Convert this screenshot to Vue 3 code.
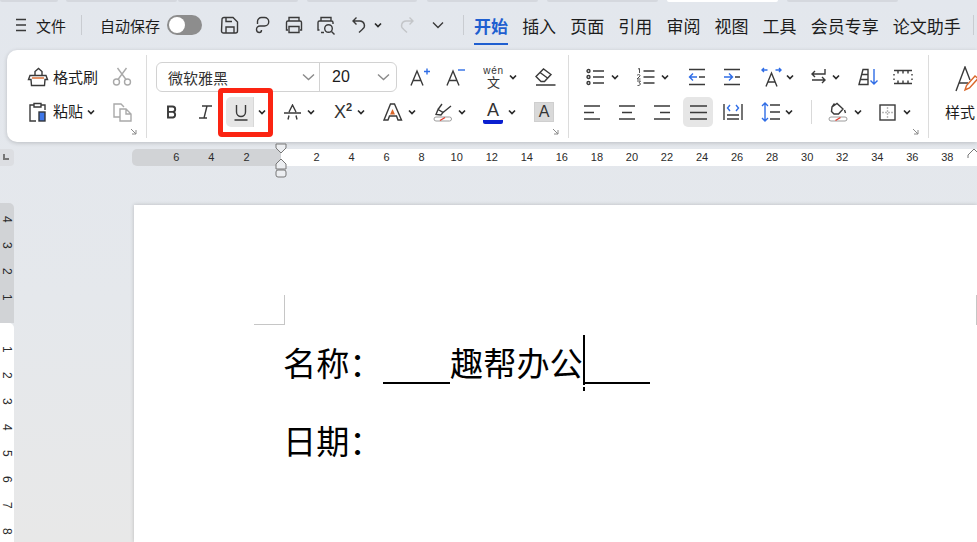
<script setup>
const tabs = ['插入', '页面', '引用', '审阅', '视图', '工具', '会员专享', '论文助手']
const rulerLeft = [6, 4, 2]
const rulerRight = [2, 4, 6, 8, 10, 12, 14, 16, 18, 20, 22, 24, 26, 28, 30, 32, 34, 36, 38]
</script>

<template>
  <div class="app">
    <div class="tabstrip">
      <i class="t1"></i><i class="t2"></i><i class="t3"></i><i class="t4"></i><i class="t5"></i><i class="t6"></i><i class="t7"></i><i class="t8"></i>
    </div>

    <header class="menubar">
      <svg class="ic hamburger" width="12" height="14" viewBox="0 0 12 14"><path d="M1 1.500h10M1 7h10M1 12.500h10" /></svg>
      <span class="file">文件</span>
      <span class="vsep sep-a"></span>
      <span class="autosave">自动保存</span>
      <span class="toggle"><span class="knob"></span></span>
      <svg class="ic qa-save" width="20" height="20" viewBox="0 0 20 20"><path d="M2 4.500a2 2 0 0 1 2-2h9l4.500 4.500v9a2 2 0 0 1-2 2h-12a2 2 0 0 1-2-2zM6 2.500v4h6M6 18v-6h8v6" /></svg>
      <svg class="ic qa-share" width="18" height="20" viewBox="0 0 18 20"><path d="M4.500 9V6.500a4 4 0 0 1 4-4h3a4 4 0 0 1 0 8.500H7a3.500 3.500 0 0 0-3.500 3.500A3 3 0 0 0 6.500 17.500c1.500 0 2-1 2-2.500" /></svg>
      <svg class="ic qa-print" width="20" height="20" viewBox="0 0 20 20"><path d="M5 6V2.500h10V6M4 15H2.500V7.500a1.500 1.500 0 0 1 1.500-1.500h12a1.500 1.500 0 0 1 1.500 1.500V15H16M5 11.500h10v6H5z" /></svg>
      <svg class="ic qa-preview" width="20" height="20" viewBox="0 0 20 20"><path d="M5 6V2.500h10V6M3.500 15H2V7.500A1.500 1.500 0 0 1 3.500 6h12A1.500 1.500 0 0 1 17 7.500V9M8 17.500H5" /><circle cx="12.500" cy="13.500" r="3.800" /><path d="M15.500 16.500l3 3" /></svg>
      <svg class="ic qa-undo" width="16" height="18" viewBox="0 0 16 18"><path d="M5.500 1.500L2 5l3.500 3.500M2 5h7a4.500 4.500 0 0 1 2.500 8.200L8 16.500" /></svg>
      <svg class="chev qa-c1" width="8" height="6" viewBox="0 0 8 6"><path d="M1 1.500l3 3 3-3" /></svg>
      <svg class="ic qa-redo" width="16" height="18" viewBox="0 0 16 18"><path d="M10.500 1.500L14 5l-3.500 3.500M14 5H7a4.500 4.500 0 0 0-2.500 8.200L8 16.500" /></svg>
      <svg class="ic qa-more" width="14" height="8" viewBox="0 0 14 8"><path d="M2 1.500l5 5 5-5" /></svg>
      <span class="vsep sep-b"></span>
      <nav class="tabs">
        <span class="tab active">开始</span>
        <span v-for="t in tabs" :key="t" class="tab">{{ t }}</span>
      </nav>
      <span class="vsep sep-c"></span>
    </header>

    <section class="ribbon">
      <div class="group g-clip">
        <div class="row">
          <svg class="ic i-brush" width="22" height="22" viewBox="0 0 22 22"><path d="M3 9.500h16l1.500 4H18l-.5 6H4.500L4 13.500H1.500zM8 9.500V5.500l3.500-3 3.500 3v4" /><path class="orange" d="M5 12h12" /></svg>
          <span class="lbl">格式刷</span>
          <svg class="ic gray i-cut" width="20" height="20" viewBox="0 0 20 20"><circle cx="4.500" cy="15" r="3" /><circle cx="15.500" cy="15" r="3" /><path d="M6 12.500L14.500 1M14 12.500L5.500 1" /></svg>
        </div>
        <div class="row row2">
          <svg class="ic i-paste" width="20" height="22" viewBox="0 0 20 22"><path d="M6 4H2v16h6M13 4h4v5M6 2.500h7V6H6z" /><rect class="bluefill" x="11" y="11" width="6" height="9" /></svg>
          <span class="lbl">粘贴</span>
          <svg class="chev c-paste" width="8" height="6" viewBox="0 0 8 6"><path d="M1 1.500l3 3 3-3" /></svg>
          <svg class="ic gray i-copy" width="20" height="20" viewBox="0 0 20 20"><path d="M8 15H2V2h7l3 3M8 7h6l5 5v7H8zM14 7v5h5" /></svg>
        </div>
        <svg class="launcher" width="7" height="7" viewBox="0 0 7 7"><path d="M1 1l5 5M6 2v4H2" /></svg>
      </div>

      <div class="group g-font">
        <div class="row">
          <div class="fontbox">
            <span class="fontname">微软雅黑</span>
            <svg class="ic box-chev" width="13" height="8" viewBox="0 0 13 8"><path d="M1 1.500l5.500 5 5.500-5" /></svg>
            <span class="fontsize">20</span>
            <svg class="ic box-chev" width="13" height="8" viewBox="0 0 13 8"><path d="M1 1.500l5.500 5 5.500-5" /></svg>
          </div>
          <svg class="ic i-grow" width="20" height="20" viewBox="0 0 20 20"><path d="M1 18.500L7 4l6 14.500M3 13.500h8" /><path class="blue" d="M14 4.500h6M17 1.500v6" /></svg>
          <svg class="ic i-shrink" width="20" height="20" viewBox="0 0 20 20"><path d="M1 18.500L7 4l6 14.500M3 13.500h8" /><path class="blue" d="M12 3h7" /></svg>
          <span class="wen"><span class="wen-py">wén</span><span class="wen-zh">文</span></span>
          <svg class="chev c-wen" width="8" height="6" viewBox="0 0 8 6"><path d="M1 1.500l3 3 3-3" /></svg>
          <svg class="ic i-eraser" width="21" height="18" viewBox="0 0 21 18"><path d="M1 8.500L8.500 1l7.500 5.500-6.500 7H6zM5 4.500L12.500 10M1 17h19.500" /></svg>
        </div>
        <div class="row row2">
          <svg class="ic i-bold" width="12" height="14" viewBox="0 0 12 14"><path class="thick" d="M2 1.500h4.500a2.700 2.700 0 0 1 0 5.400H2zM2 6.900h5a2.900 2.900 0 0 1 0 5.600H2z" /></svg>
          <svg class="ic i-italic" width="15" height="14" viewBox="0 0 15 14"><path d="M4 1h10M9 1L6 13M1 13h8" /></svg>
          <div class="ubtn">
            <span class="ubtn-main">
              <svg class="ic" width="14" height="17" viewBox="0 0 14 17"><path d="M2.500 1v7a4.500 4.500 0 0 0 9 0V1M0.500 16h13" /></svg>
            </span>
            <span class="ubtn-arrow">
              <svg class="chev" width="8" height="6" viewBox="0 0 8 6"><path d="M1 1.500l3 3 3-3" /></svg>
            </span>
          </div>
          <svg class="ic i-strike" width="17" height="17" viewBox="0 0 17 17"><path d="M4 15.500l1-4M12 11.500l1 4M5 8l3.500-7L12 8M0 9h17" /></svg>
          <svg class="chev c-strike" width="8" height="6" viewBox="0 0 8 6"><path d="M1 1.500l3 3 3-3" /></svg>
          <span class="super">X<sup>2</sup></span>
          <svg class="chev c-super" width="8" height="6" viewBox="0 0 8 6"><path d="M1 1.500l3 3 3-3" /></svg>
          <svg class="ic i-texta" width="20" height="20" viewBox="0 0 20 20"><path d="M1 18L7.500 2h4L18.500 18H15l-1.500-4h-7L5 18z" /><path class="orangefill" d="M9.500 7l2.500 5.500H7z" /></svg>
          <svg class="chev c-texta" width="8" height="6" viewBox="0 0 8 6"><path d="M1 1.500l3 3 3-3" /></svg>
          <svg class="ic i-high" width="20" height="20" viewBox="0 0 20 20"><path d="M3 12.500l2-5 5 3-2 2.500zM5 7.500L9 2M10 10.500L18 4" /><rect class="pill" x="1" y="15" width="17.500" height="4" rx="2" /><path class="red" d="M7 18.500l5-3" /></svg>
          <svg class="chev c-high" width="8" height="6" viewBox="0 0 8 6"><path d="M1 1.500l3 3 3-3" /></svg>
          <span class="fcolor">A</span>
          <svg class="chev c-fcolor" width="8" height="6" viewBox="0 0 8 6"><path d="M1 1.500l3 3 3-3" /></svg>
          <span class="shaded">A</span>
        </div>
        <svg class="launcher" width="7" height="7" viewBox="0 0 7 7"><path d="M1 1l5 5M6 2v4H2" /></svg>
      </div>

      <div class="group g-para">
        <div class="row">
          <svg class="ic i-bullet" width="19" height="18" viewBox="0 0 19 18"><circle cx="2.500" cy="3" r="1.500" /><circle cx="2.500" cy="9" r="1.500" /><circle cx="2.500" cy="15" r="1.500" /><path d="M7 3h11M7 9h11M7 15h11" /></svg>
          <svg class="chev c-bullet" width="8" height="6" viewBox="0 0 8 6"><path d="M1 1.500l3 3 3-3" /></svg>
          <svg class="ic i-num" width="19" height="18" viewBox="0 0 19 18"><path class="thin" d="M2 1l1.500-.5v4.500M1 7.500c1-1.500 3.500-1 3 .5L1 11h3.500M1 13h3.500l-1.500 1.800c2 0 2 3-1.500 2.700" /><path d="M7.500 3h11M7.500 9h11M7.500 15h11" /></svg>
          <svg class="chev c-num" width="8" height="6" viewBox="0 0 8 6"><path d="M1 1.500l3 3 3-3" /></svg>
          <svg class="ic i-out" width="18" height="18" viewBox="0 0 18 18"><path d="M1 1.500h16M11 9h6M1 16.500h16" /><path class="blue" d="M9 9H1.500M5 5.500L1.500 9 5 12.500" /></svg>
          <svg class="ic i-in" width="18" height="18" viewBox="0 0 18 18"><path d="M1 1.500h16M12 9h5M1 16.500h16" /><path class="blue" d="M1 9h8.500M6 5.500L9.500 9 6 12.500" /></svg>
          <svg class="ic i-awide" width="21" height="20" viewBox="0 0 21 20"><path d="M5 19.500L10.500 6l5.500 13.500M6.500 15h8" /><path class="blue" d="M1 3h5.500M3 1L1 3l2 2M14.500 3H20M18 1l2 2-2 2" /></svg>
          <svg class="chev c-awide" width="8" height="6" viewBox="0 0 8 6"><path d="M1 1.500l3 3 3-3" /></svg>
          <svg class="ic i-flow" width="17" height="18" viewBox="0 0 17 18"><path d="M15 1v5H2M5 3L2 6l3 3M2 12h13M12 9l3 3-3 3" /></svg>
          <svg class="chev c-flow" width="8" height="6" viewBox="0 0 8 6"><path d="M1 1.500l3 3 3-3" /></svg>
          <svg class="ic i-sort" width="21" height="18" viewBox="0 0 21 18"><path d="M1 16.500L5 1.500h5v15zM3.500 6.500H10M2.500 11.500H10" /><path class="blue" d="M16 1v15M12.500 12.500L16 16l3.500-3.500" /></svg>
          <svg class="ic i-ruler" width="20" height="18" viewBox="0 0 20 18"><path d="M1 2.500h18M1 15.500h18M1 6v1.500M1 10.500V12M19 6v1.500M19 10.500V12M5 2.500v3M10 2.500v3M15 2.500v3M5 12.500v3M10 12.500v3M15 12.500v3" /></svg>
        </div>
        <div class="row row2">
          <svg class="ic i-al" width="17" height="17" viewBox="0 0 17 17"><path d="M0 2h16M0 8.500h10M0 15h16" /></svg>
          <svg class="ic i-ac" width="17" height="17" viewBox="0 0 17 17"><path d="M0 2h16M3 8.500h10M0 15h16" /></svg>
          <svg class="ic i-ar" width="17" height="17" viewBox="0 0 17 17"><path d="M0 2h16M6 8.500h10M0 15h16" /></svg>
          <span class="justify">
            <svg class="ic" width="17" height="17" viewBox="0 0 17 17"><path d="M0 2h17M0 8.500h17M0 15h17" /></svg>
          </span>
          <svg class="ic i-dist" width="20" height="18" viewBox="0 0 20 18"><path d="M1 1v16M19 1v16M4 12h12M4 16h12" /><path class="blue" d="M7 2L4.500 5 7 8M13 2l2.500 3L13 8" /></svg>
          <svg class="ic i-line" width="19" height="20" viewBox="0 0 19 20"><path d="M9 3h10M9 10h10M9 17h10" /><path class="blue" d="M4 1v18M1 4l3-3 3 3M1 16l3 3 3-3" /></svg>
          <svg class="chev c-line" width="8" height="6" viewBox="0 0 8 6"><path d="M1 1.500l3 3 3-3" /></svg>
          <span class="vsep sep-d"></span>
          <svg class="ic i-paint" width="20" height="20" viewBox="0 0 20 20"><path d="M4 5l5-3.500 6 5.500-4.500 5H6L3.500 9.500zM6.500 1.500L4 5M16.500 8l1 3" /><rect class="pill" x="1" y="15" width="18" height="4" rx="2" /><path class="red" d="M7.500 18.500l5-3" /></svg>
          <svg class="chev c-paint" width="8" height="6" viewBox="0 0 8 6"><path d="M1 1.500l3 3 3-3" /></svg>
          <svg class="ic i-border" width="17" height="17" viewBox="0 0 17 17"><rect x="1" y="1" width="15" height="15" /><path class="faint" d="M8.500 3v11M3 8.500h11" /></svg>
          <svg class="chev c-border" width="8" height="6" viewBox="0 0 8 6"><path d="M1 1.500l3 3 3-3" /></svg>
        </div>
        <svg class="launcher" width="7" height="7" viewBox="0 0 7 7"><path d="M1 1l5 5M6 2v4H2" /></svg>
      </div>

      <div class="group g-style">
        <svg class="ic i-style" width="24" height="26" viewBox="0 0 24 26"><path d="M1 25L10 1l5 13M4 17h9" /><path class="orange" d="M10 24l1.500-4.500L20 10l3 2.500-8.500 9.500z" /></svg>
        <span class="lbl style-lbl">样式</span>
      </div>
    </section>

    <div class="hruler">
      <span class="corner"><i></i></span>
      <div class="ruler-grey">
        <span v-for="n in rulerLeft" :key="n" class="tick">{{ n }}</span>
      </div>
      <div class="ruler-white">
        <span v-for="n in rulerRight" :key="n" class="tick">{{ n }}</span>
      </div>
      <svg class="marker left-marker" width="14" height="36" viewBox="0 0 14 36"><path d="M2 1h10v4l-5 5-5-5z" /><path d="M7 16l5 5v5H2v-5z" /><rect x="2" y="27" width="10" height="7" rx="2" /></svg>
      <svg class="marker right-marker" width="12" height="20" viewBox="0 0 12 20"><path d="M1 19v-3l6-6 5 5" /></svg>
    </div>

    <main class="workspace">
      <aside class="vruler">
        <div class="v-grey">
          <span v-for="n in [4, 3, 2, 1]" :key="n" class="vtick">{{ n }}</span>
        </div>
        <div class="v-white">
          <span v-for="n in 8" :key="n" class="vtick">{{ n }}</span>
        </div>
      </aside>
      <article class="page">
        <div class="crop-row">
          <span class="crop"></span>
          <span class="crop-right"></span>
        </div>
        <p class="line first">
          <span>名称：</span><span class="blank"></span><span class="filled">趣帮办公</span><span class="blank"></span>
          <span class="caret"></span>
        </p>
        <p class="line second">日期：</p>
      </article>
    </main>
  </div>
</template>

<style>
html, body {
  margin: 0;
  overflow: hidden;
}
</style>

<style scoped>
.app {
  width: 977px;
  height: 542px;
  overflow: hidden;
  position: relative;
  font-family: "Noto Sans CJK SC", "Liberation Sans", sans-serif;
  color: #1c1c1c;
  background: linear-gradient(180deg, #e3e7ed 0%, #e5e8ec 55%, #e8e8e8 100%);
}
.tabstrip {
  height: 2px;
  display: flex;
}
.tabstrip i {
  display: block;
  flex: none;
  background: #d5d8de;
  border-radius: 0 0 6px 6px;
}
.t1 { width: 58px; }
.t2 { width: 111px; margin-left: 8px; }
.t3 { width: 120px; margin-left: 1px; }
.t4 { width: 110px; margin-left: 9px; }
.t5 { width: 111px; margin-left: 10px; }
.t6 { width: 111px; margin-left: 9px; }
.t7 { width: 111px; margin-left: 9px; background: #fff !important; }
.t8 { width: 111px; margin-left: 9px; }

.ic {
  display: block;
  flex: none;
  fill: none;
  stroke: #3a3a3a;
  stroke-width: 1.400;
}
.chev {
  display: block;
  flex: none;
  fill: none;
  stroke: #2a2a2a;
  stroke-width: 1.700;
}
.blue { stroke: #2f6de6; }
.orange { stroke: #d9662a; }
.red { stroke: #e0392b; }
.pill { stroke: #9c9c9c; stroke-width: 1; }
.faint { stroke: #b9b9b9; stroke-dasharray: 2 1; }
.thin { stroke-width: 0.900; }
.thick { stroke-width: 1.900; }
.gray { stroke: #a9a9a9; }
.bluefill { fill: #3e77e8; stroke: #33363b; }
.orangefill { fill: #d9662a; stroke: none; }

.menubar {
  height: 46px;
  display: flex;
  align-items: center;
  font-size: 15px;
  white-space: nowrap;
}
.hamburger { margin-left: 15px; }
.file { margin-left: 9px; flex: none; }
.vsep {
  display: block;
  width: 1px;
  flex: none;
  background: #c9ccd1;
}
.sep-a { height: 20px; margin-left: 15px; }
.autosave { margin-left: 18px; flex: none; }
.toggle {
  width: 35px;
  height: 20px;
  margin-left: 7px;
  border-radius: 10px;
  background: #8d8d8d;
  display: flex;
  flex: none;
  align-items: center;
  padding-left: 2px;
  box-sizing: border-box;
}
.knob {
  width: 16px;
  height: 16px;
  border-radius: 50%;
  background: #fff;
}
.qa-save { margin-left: 18px; }
.qa-share { margin-left: 13px; }
.qa-print { margin-left: 13px; }
.qa-preview { margin-left: 12px; }
.qa-undo { margin-left: 15px; }
.qa-c1 { margin-left: 7px; }
.qa-redo { margin-left: 17px; stroke: #c3c5c8; }
.qa-more { margin-left: 16px; }
.sep-b { height: 20px; margin-left: 18px; }
.tabs {
  display: flex;
  flex: none;
  margin-left: 10px;
  gap: 14.100px;
  font-size: 17px;
}
.tab {
  height: 46px;
  line-height: 47px;
  box-sizing: border-box;
  white-space: nowrap;
}
.tab.active {
  color: #1f5fd0;
  font-weight: 700;
  position: relative;
}
.tab.active::after {
  content: "";
  position: absolute;
  left: 0;
  right: 0;
  bottom: 3px;
  height: 2px;
  background: #1f5fd0;
}
.sep-c { height: 20px; margin-left: 12px; }

.ribbon {
  margin: 2px 0 0 7px;
  height: 92px;
  background: #fff;
  border-radius: 10px 0 0 10px;
  box-shadow: 0 1px 4px rgba(0, 0, 0, .18);
  display: flex;
  font-size: 14px;
}
.group {
  position: relative;
  flex: none;
  box-sizing: border-box;
  display: flex;
  flex-direction: column;
  margin: 5px 0 4px;
  border-right: 1px solid #dcdcdc;
  height: 83px;
}
.row {
  height: 30px;
  margin-top: 7px;
  display: flex;
  align-items: center;
}
.row2 {
  height: 30px;
  margin-top: 5px;
}
.launcher {
  position: absolute;
  right: 9px;
  bottom: 3px;
  fill: none;
  stroke: #8a8a8a;
}
.g-clip { width: 140px; padding-left: 21px; }
.lbl { margin-left: 5px; font-size: 15px; white-space: nowrap; flex: none; }
.row2 .lbl { margin-top: -3px; }
.i-brush { margin-left: -1px; }
.i-brush + .lbl { margin-left: 4px; margin-top: -2px; }
.i-cut { margin-left: 14px; }
.c-paste { margin-left: 4px; }
.i-copy { margin-left: 17px; }

.g-font { width: 422px; padding-left: 9px; }
.fontbox {
  width: 241px;
  height: 30px;
  box-sizing: border-box;
  border: 1px solid #d2d2d2;
  border-radius: 6px;
  display: flex;
  align-items: center;
  flex: none;
}
.fontname {
  width: 145px;
  padding-left: 11px;
  box-sizing: border-box;
  font-size: 15px;
  color: #333;
  flex: none;
}
.box-chev { stroke: #8a8a8a; }
.fontsize {
  margin-left: 4px;
  padding-left: 12px;
  width: 58px;
  flex: none;
  box-sizing: border-box;
  border-left: 1px solid #d2d2d2;
  height: 28px;
  line-height: 27px;
  font-size: 16px;
  font-family: "Liberation Sans", sans-serif;
}
.i-grow { margin-left: 13px; }
.i-shrink { margin-left: 16px; }
.wen {
  margin-left: 15px;
  width: 25px;
  flex: none;
  display: flex;
  flex-direction: column;
  align-items: center;
  color: #333;
}
.wen-py {
  font: 10px/9px "Liberation Sans", sans-serif;
  letter-spacing: 0.800px;
  height: 9px;
  overflow: hidden;
}
.wen-zh { font-size: 13px; line-height: 13px; height: 13px; }
.c-wen { margin-left: 3px; }
.i-eraser { margin-left: 18px; }

.i-bold { margin-left: 10px; }
.i-italic { margin-left: 20px; }
.ubtn {
  margin-left: 13px;
  width: 43px;
  height: 30px;
  display: flex;
  flex: none;
  position: relative;
}
.ubtn::after {
  content: "";
  position: absolute;
  left: -8px;
  top: -9px;
  width: 55px;
  height: 49px;
  box-sizing: border-box;
  border: 5px solid #fb2412;
  border-radius: 4px;
}
.ubtn-main {
  width: 28px;
  height: 30px;
  background: #e6e6e6;
  border-radius: 5px 0 0 5px;
  display: flex;
  align-items: center;
  justify-content: center;
  padding-left: 3px;
  box-sizing: border-box;
}
.ubtn-arrow {
  width: 15px;
  display: flex;
  align-items: center;
  justify-content: center;
  border-left: 1px solid #d8d8d8;
}
.i-strike { margin-left: 15px; }
.c-strike { margin-left: 6px; }
.super {
  margin-left: 19px;
  font: 18px "Liberation Sans", sans-serif;
  color: #333;
  width: 20px;
  flex: none;
}
.super sup { font-size: 11px; line-height: 0; font-weight: 700; }
.c-super { margin-left: 3px; }
.i-texta { margin-left: 18px; }
.c-texta { margin-left: 5px; }
.i-high { margin-left: 17px; }
.c-high { margin-left: 5px; }
.fcolor {
  margin-left: 17px;
  width: 20px;
  flex: none;
  height: 24px;
  box-sizing: border-box;
  border-bottom: 4px solid #0a1fd0;
  border-radius: 0 0 2px 2px;
  text-align: center;
  font: 18px/20px "Liberation Sans", sans-serif;
  color: #333;
}
.c-fcolor { margin-left: 5px; }
.shaded {
  margin-left: 18px;
  width: 20px;
  flex: none;
  height: 20px;
  background: #d9d9d9;
  border: 1px solid #cfcfcf;
  box-sizing: border-box;
  text-align: center;
  font: 16px/18px "Liberation Sans", sans-serif;
  color: #333;
}

.g-para { width: 360px; padding-left: 17px; }
.c-bullet { margin-left: 6px; }
.i-num { margin-left: 17px; }
.c-num { margin-left: 6px; }
.i-out { margin-left: 19px; }
.i-in { margin-left: 17px; }
.i-awide { margin-left: 20px; }
.c-awide { margin-left: 4px; }
.i-flow { margin-left: 16px; }
.c-flow { margin-left: 5px; }
.i-sort { margin-left: 18px; }
.i-ruler { margin-left: 14px; }

.row2 .i-al { margin-left: -2px; }
.i-ac { margin-left: 18px; }
.i-ar { margin-left: 18px; }
.justify {
  margin-left: 12px;
  width: 30px;
  height: 30px;
  background: #e6e6e6;
  border-radius: 5px;
  display: flex;
  align-items: center;
  justify-content: center;
  flex: none;
}
.i-dist { margin-left: 10px; }
.i-line { margin-left: 18px; }
.c-line { margin-left: 5px; }
.sep-d { height: 24px; margin-left: 18px; background: #d9d9d9; }
.i-paint { margin-left: 16px; }
.c-paint { margin-left: 6px; }
.i-border { margin-left: 17px; }
.c-border { margin-left: 7px; }

.g-style {
  border-right: 0;
  padding-left: 16px;
  width: 48px;
}
.i-style { margin: 11px 0 0 10px; }
.style-lbl { margin: 9px 0 0 0; }

.hruler {
  margin-top: 7px;
  height: 17px;
  display: flex;
  position: relative;
}
.corner {
  width: 14px;
  background: #dcdee2;
  border-radius: 0 4px 4px 0;
  position: relative;
}
.corner i {
  position: absolute;
  left: 3px;
  top: 5px;
  width: 6px;
  height: 6px;
  box-sizing: border-box;
  border-left: 2px solid #777;
  border-bottom: 2px solid #777;
}
.ruler-grey {
  margin-left: 118px;
  width: 149px;
  background: #d1d3d6;
  border-radius: 5px 0 0 5px;
  display: flex;
  justify-content: flex-end;
  padding-right: 17px;
  box-sizing: border-box;
}
.ruler-white {
  width: 696px;
  background: #fff;
  display: flex;
}
.tick {
  font: 11px/17px "Liberation Sans", sans-serif;
  color: #2b2b2b;
  width: 35.050px;
  text-align: center;
  flex: none;
}
.ruler-white .tick:first-child { margin-left: 18px; }
.marker {
  position: absolute;
  fill: #eceef1;
  stroke: #777;
  stroke-width: 1;
}
.left-marker { left: 274px; top: -6px; }
.right-marker { left: 967px; top: -10px; fill: none; }

.workspace {
  position: absolute;
  left: 0;
  right: 0;
  top: 166px;
  bottom: 0;
  display: flex;
}
.vruler {
  width: 14px;
  padding-top: 37px;
  flex: none;
}
.v-grey {
  height: 120px;
  background: #d1d3d6;
  border-radius: 0 5px 0 0;
  display: flex;
  flex-direction: column;
  padding-top: 3px;
  box-sizing: border-box;
}
.v-white {
  background: #fff;
  height: 230px;
  border-radius: 0 5px 0 0;
  display: flex;
  flex-direction: column;
  padding-top: 13px;
  box-sizing: border-box;
}
.vtick {
  height: 26px;
  width: 14px;
  flex: none;
  writing-mode: vertical-rl;
  text-align: center;
  font: 12px/14px "Liberation Sans", sans-serif;
  color: #2b2b2b;
}
.page {
  margin: 39px 0 0 120px;
  flex: 1;
  background: #fff;
  box-shadow: 0 0 4px rgba(0, 0, 0, .2);
  padding-left: 120px;
  position: relative;
  min-width: 0;
}
.crop-row {
  display: flex;
  padding-top: 90px;
  justify-content: space-between;
}
.crop {
  width: 31px;
  height: 30px;
  box-sizing: border-box;
  border-right: 1px solid #c6c6c6;
  border-bottom: 1px solid #c6c6c6;
}
.crop-right {
  width: 1px;
  height: 30px;
  background: #c6c6c6;
}
.line {
  margin: 0;
  font-size: 33.200px;
  line-height: 50px;
  color: #000;
  white-space: nowrap;
  padding-left: 29px;
  display: flex;
  position: relative;
}
.first { margin-top: 12px; height: 78px; }
.second { height: 50px; }
.blank {
  display: block;
  width: 67.500px;
  height: 45px;
  border-bottom: 2px solid #000;
  box-sizing: content-box;
  flex: none;
}
.caret {
  position: absolute;
  left: 329px;
  top: -2px;
  width: 2px;
  height: 56px;
  background: linear-gradient(#000 0 50px, #fff 50px 52px, #000 52px);
}
</style>
